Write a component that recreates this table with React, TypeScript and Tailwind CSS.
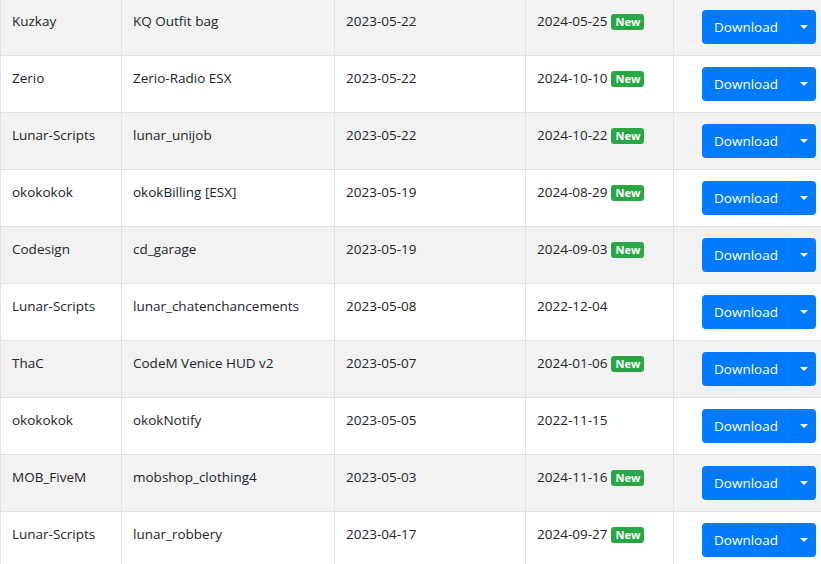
const rows = [
  {author: "Kuzkay", name: "KQ Outfit bag", added: "2023-05-22", updated: "2024-05-25", isNew: true},
  {author: "Zerio", name: "Zerio-Radio ESX", added: "2023-05-22", updated: "2024-10-10", isNew: true},
  {author: "Lunar-Scripts", name: "lunar_unijob", added: "2023-05-22", updated: "2024-10-22", isNew: true},
  {author: "okokokok", name: "okokBilling [ESX]", added: "2023-05-19", updated: "2024-08-29", isNew: true},
  {author: "Codesign", name: "cd_garage", added: "2023-05-19", updated: "2024-09-03", isNew: true},
  {author: "Lunar-Scripts", name: "lunar_chatenchancements", added: "2023-05-08", updated: "2022-12-04", isNew: false},
  {author: "ThaC", name: "CodeM Venice HUD v2", added: "2023-05-07", updated: "2024-01-06", isNew: true},
  {author: "okokokok", name: "okokNotify", added: "2023-05-05", updated: "2022-11-15", isNew: false},
  {author: "MOB_FiveM", name: "mobshop_clothing4", added: "2023-05-03", updated: "2024-11-16", isNew: true},
  {author: "Lunar-Scripts", name: "lunar_robbery", added: "2023-04-17", updated: "2024-09-27", isNew: true},
]

function DownloadButton() {
  return (
    <div className="flex h-[34px] w-[114px] rounded-[4px] bg-[#007bff] text-white overflow-hidden">
      <button className="flex-1 pl-[12px] text-left leading-[34px]">Download</button>
      <button className="w-[25px] flex items-center justify-center border-l border-[#0a6fe0]">
        <span className="block w-0 h-0 border-l-[4px] border-r-[4px] border-t-[4px] border-l-transparent border-r-transparent border-t-white"/>
      </button>
    </div>
  )
}

export default function App() {
  return (
    <div className="w-[821px] h-[564px] overflow-hidden bg-white text-[#212529] text-[13.5px] leading-[21px]"
         style={{fontFamily: '"Open Sans", "Noto Sans", sans-serif'}}>
      <div className="-mt-[2px] w-[840px]">
        {rows.map((r, i) => (
          <div key={i}
               className={`grid grid-cols-[121px_213px_191px_148px_1fr] h-[57px] border-t border-[#dee2e6] ${i % 2 === 0 ? "bg-[#f2f2f2]" : "bg-white"}`}>
            <div className="border-l border-[#dee2e6] pl-[11px] pt-[12px]">{r.author}</div>
            <div className="border-l border-[#dee2e6] pl-[11px] pt-[12px]">{r.name}</div>
            <div className="border-l border-[#dee2e6] pl-[11px] pt-[12px]">{r.added}</div>
            <div className="border-l border-[#dee2e6] pl-[11px] pt-[12px] flex items-start gap-[4px]">
              <span>{r.updated}</span>
              {r.isNew && (
                <span className="mt-[3px] h-[16px] px-[4px] rounded-[3px] bg-[#28a745] text-white text-[11px] font-bold leading-[16px]">New</span>
              )}
            </div>
            <div className="border-l border-[#dee2e6] pl-[28px] pt-[11px]">
              <DownloadButton/>
            </div>
          </div>
        ))}
      </div>
    </div>
  )
}
